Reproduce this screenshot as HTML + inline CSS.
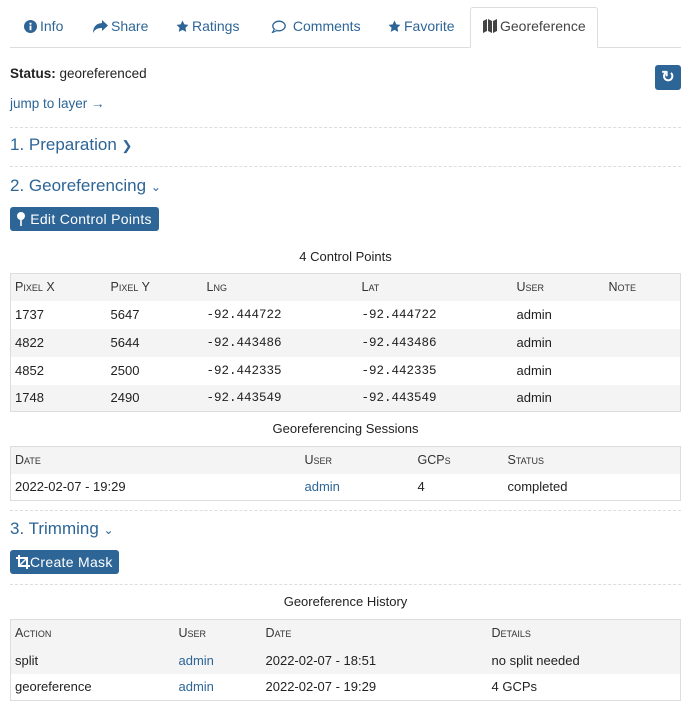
<!DOCTYPE html>
<html><head><meta charset="utf-8"><style>
*{box-sizing:border-box;margin:0;padding:0}
body{width:695px;height:714px;background:#fff;font-family:"Liberation Sans",sans-serif;color:#222;position:relative;overflow:hidden;font-size:13px}
.a{position:absolute;white-space:nowrap}
.blue{color:#2d6597}
.tab{position:absolute;top:18px;font-size:14px;color:#2d6597}
.tab svg{vertical-align:-2px;margin-right:3px}
.dot{position:absolute;left:10px;width:671px;border-top:1px dashed #ddd}
h2{position:absolute;left:10px;font-weight:normal;font-size:17px;color:#2d6597}
.btn{position:absolute;left:10px;background:#2d6597;color:#fff;border-radius:3px;font-size:14px;line-height:24px;padding:0 6px}
.btn svg{vertical-align:-2px}
table{position:absolute;left:10px;width:671px;border:1px solid #ddd;border-collapse:collapse;font-size:13px}
td,th{padding:0 4px;text-align:left;white-space:nowrap}
th{font-weight:normal;font-variant:small-caps;height:27px;background:#f4f4f4;font-size:12.5px;color:#333}
tr.g td{background:#f4f4f4}
.cap{position:absolute;left:10px;width:671px;text-align:center;font-size:13px}
.mono{font-family:"Liberation Mono",monospace;font-size:12.5px}
</style></head><body>
<div class="a" style="left:10px;top:47px;width:671px;border-top:1px solid #ddd"></div>
<div class="a" style="left:470px;top:7px;width:128px;height:41px;border:1px solid #ddd;border-bottom:1px solid #fff;border-radius:3px 3px 0 0;background:#fff"></div>
<div class="tab" style="left:24px"><svg width="13" height="13" viewBox="0 0 14 14"><circle cx="7" cy="7" r="7" fill="#2d6597"/><rect x="6" y="6" width="2" height="5" fill="#fff"/><circle cx="7" cy="4" r="1.2" fill="#fff"/></svg>Info</div>
<div class="tab" style="left:93px"><svg width="15" height="13" viewBox="0 0 15 13"><path d="M9 0L15 5.5 9 11V8C5 8 2 9 0 13 0 7 3 3.5 9 3Z" fill="#2d6597"/></svg>Share</div>
<div class="tab" style="left:176px"><svg width="13" height="13" viewBox="0 0 24 24"><path d="M12 1l3.4 7 7.6 1-5.5 5.3 1.3 7.7L12 18.3 5.2 22l1.3-7.7L1 9l7.6-1z" fill="#2d6597"/></svg>Ratings</div>
<div class="tab" style="left:271px"><svg width="15" height="13" viewBox="0 0 15 13"><ellipse cx="8" cy="6" rx="6.2" ry="4.8" fill="none" stroke="#2d6597" stroke-width="1.3"/><path d="M3.5 9L1.5 12.5 6 10.5" fill="#fff" stroke="#2d6597" stroke-width="1.2"/></svg> Comments</div>
<div class="tab" style="left:388px"><svg width="13" height="13" viewBox="0 0 24 24"><path d="M12 1l3.4 7 7.6 1-5.5 5.3 1.3 7.7L12 18.3 5.2 22l1.3-7.7L1 9l7.6-1z" fill="#2d6597"/></svg>Favorite</div>
<div class="tab" style="left:483px;color:#444"><svg width="14" height="14" viewBox="0 0 14 14"><path d="M0 2L4 0V12L0 14ZM5 0L9 2V14L5 12ZM10 2L14 0V12L10 14Z" fill="#444"/></svg>Georeference</div>
<div class="a" style="left:10px;top:66px;font-size:13.5px"><b style="font-weight:600">Status:</b> georeferenced</div>
<div class="a" style="left:655px;top:65px;width:26px;height:25px;background:#2d6597;border-radius:3px;color:#fff;text-align:center;line-height:25px;font-size:16px;font-weight:bold">&#8635;</div>
<div class="a blue" style="left:10px;top:96px;font-size:13.5px">jump to layer &#8594;</div>
<div class="dot" style="top:127px"></div>
<h2 style="top:135px">1. Preparation <span style="font-size:13px">&#10095;</span></h2>
<div class="dot" style="top:166px"></div>
<h2 style="top:176px">2. Georeferencing <span style="font-size:12px">&#8964;</span></h2>
<div class="btn" style="top:207px;height:24px;width:149px;letter-spacing:0.3px"><svg width="10" height="14" viewBox="0 0 10 14"><circle cx="5" cy="4" r="4" fill="#fff"/><rect x="4.2" y="7" width="1.6" height="7" fill="#fff"/></svg> Edit Control Points</div>
<div class="cap" style="top:249px">4 Control Points</div>
<table style="top:273px">
<tr><th style="width:96px">Pixel X</th><th style="width:96px">Pixel Y</th><th style="width:155px">Lng</th><th style="width:155px">Lat</th><th style="width:92px">User</th><th>Note</th></tr>
<tr style="height:28px"><td>1737</td><td>5647</td><td class="mono">-92.444722</td><td class="mono">-92.444722</td><td>admin</td><td></td></tr>
<tr class="g" style="height:28px"><td>4822</td><td>5644</td><td class="mono">-92.443486</td><td class="mono">-92.443486</td><td>admin</td><td></td></tr>
<tr style="height:28px"><td>4852</td><td>2500</td><td class="mono">-92.442335</td><td class="mono">-92.442335</td><td>admin</td><td></td></tr>
<tr class="g" style="height:27px"><td>1748</td><td>2490</td><td class="mono">-92.443549</td><td class="mono">-92.443549</td><td>admin</td><td></td></tr>
</table>
<div class="cap" style="top:421px">Georeferencing Sessions</div>
<table style="top:446px">
<tr><th style="width:290px">Date</th><th style="width:113px">User</th><th style="width:90px">GCPs</th><th>Status</th></tr>
<tr style="height:27px"><td>2022-02-07 - 19:29</td><td class="blue">admin</td><td>4</td><td>completed</td></tr>
</table>
<div class="dot" style="top:510px"></div>
<h2 style="top:519px">3. Trimming <span style="font-size:12px">&#8964;</span></h2>
<div class="btn" style="top:550px;height:24px;width:109px;letter-spacing:0.3px"><svg width="14" height="14" viewBox="0 0 14 14"><path d="M3 0V11H14M0 3H11V14" fill="none" stroke="#fff" stroke-width="2"/><path d="M11 3L3 11" stroke="#fff" stroke-width="1.5"/></svg>Create Mask</div>
<div class="dot" style="top:584px"></div>
<div class="cap" style="top:594px">Georeference History</div>
<table style="top:619px">
<tr><th style="width:164px">Action</th><th style="width:87px">User</th><th style="width:226px">Date</th><th>Details</th></tr>
<tr class="g" style="height:27px"><td>split</td><td class="blue">admin</td><td>2022-02-07 - 18:51</td><td>no split needed</td></tr>
<tr style="height:27px"><td>georeference</td><td class="blue">admin</td><td>2022-02-07 - 19:29</td><td>4 GCPs</td></tr>
</table>
</body></html>
